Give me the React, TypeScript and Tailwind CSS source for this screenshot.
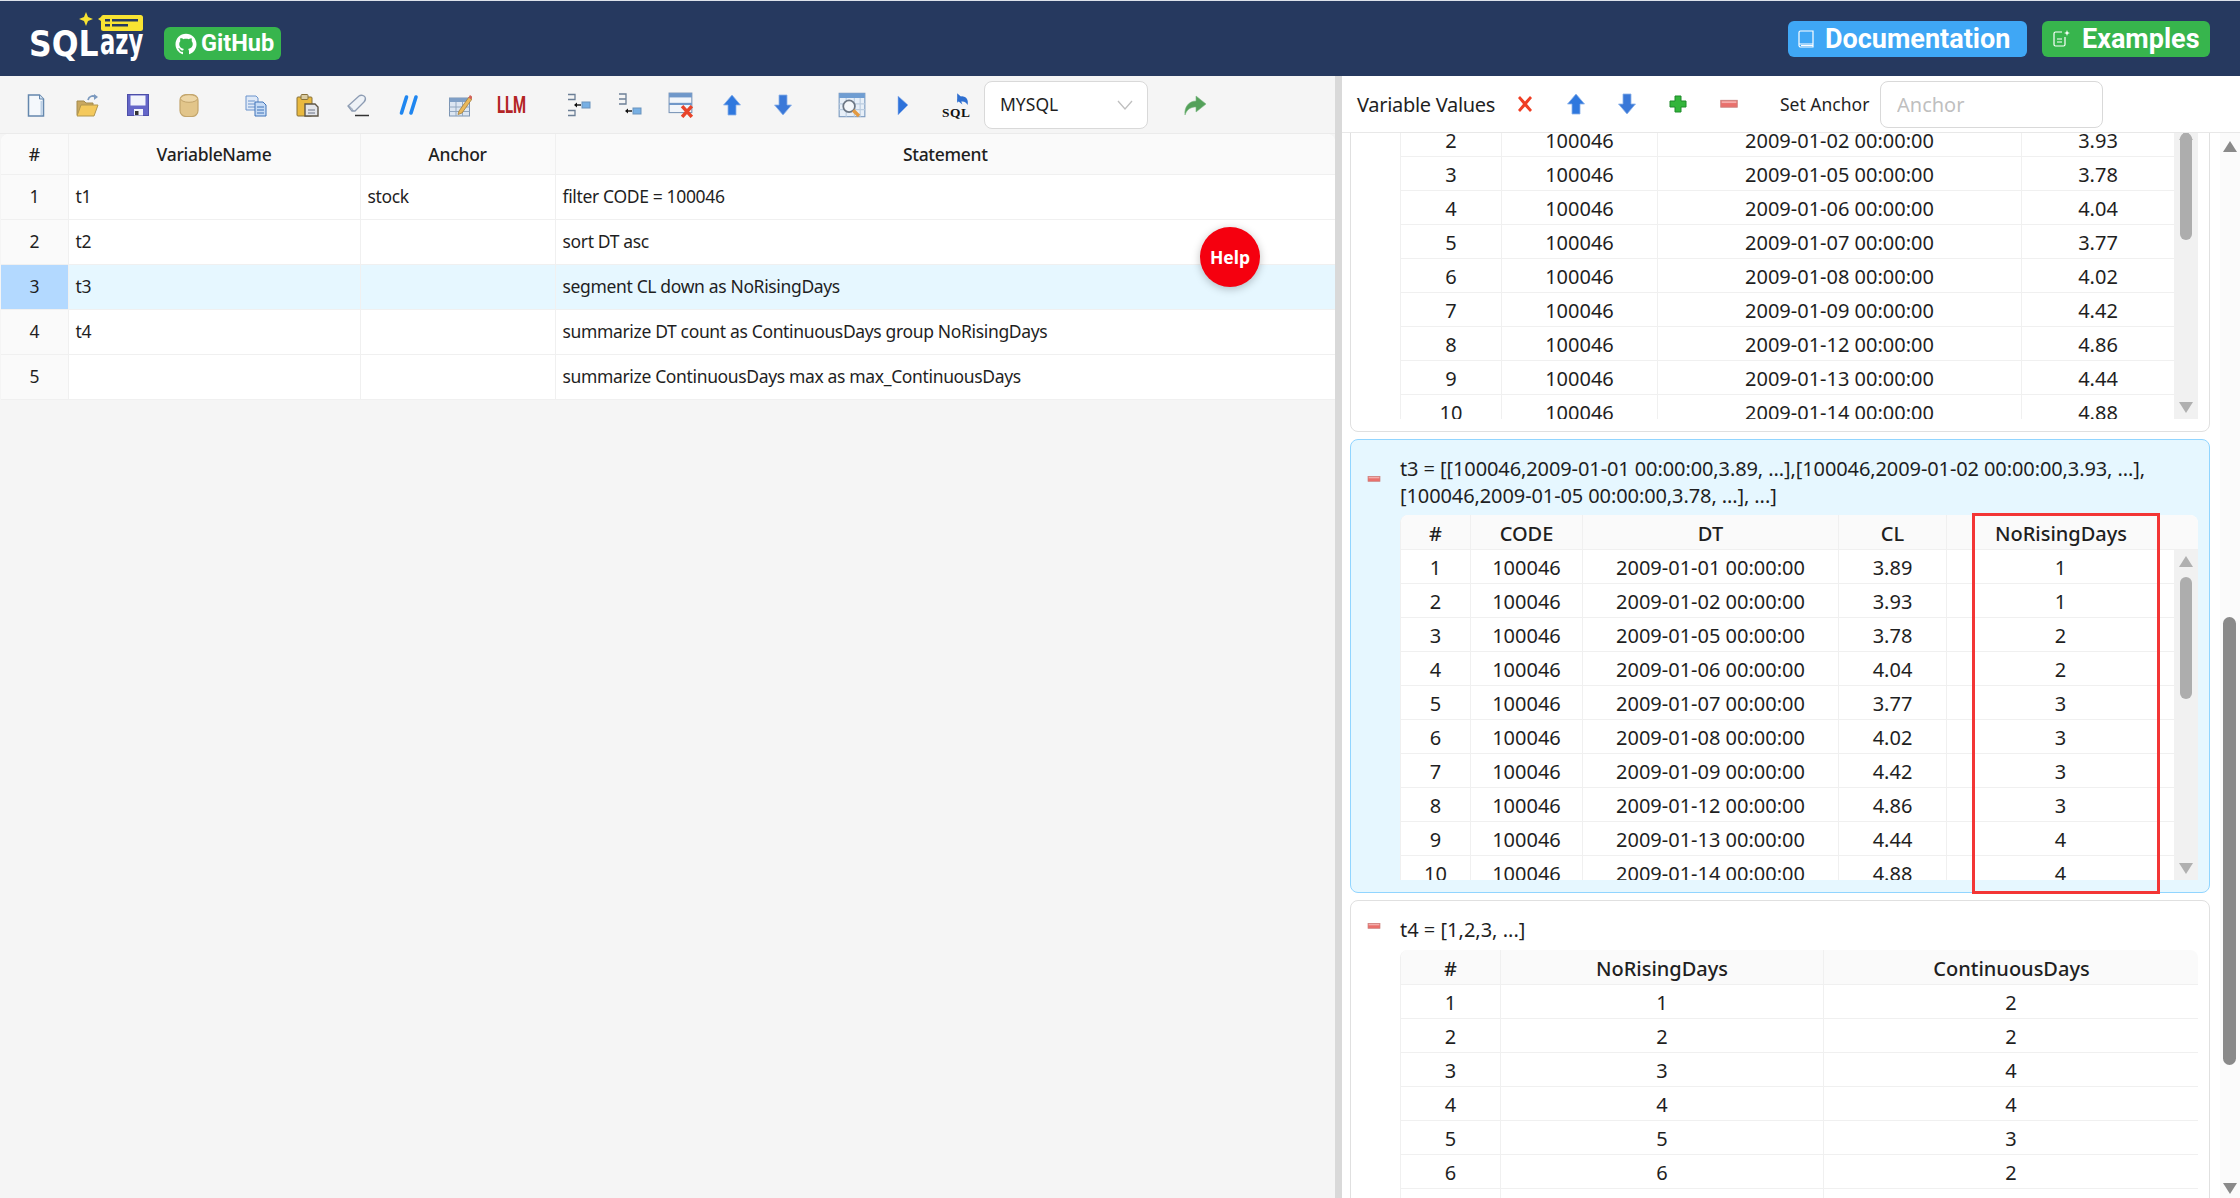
import { AiOutlineGithub } from 'react-icons/ai'
import type { ReactNode } from 'react'

type Cell = string | number

const STOCK: Array<[string, string, string]> = [
  ['1', '2009-01-01 00:00:00', '3.89'],
  ['2', '2009-01-02 00:00:00', '3.93'],
  ['3', '2009-01-05 00:00:00', '3.78'],
  ['4', '2009-01-06 00:00:00', '4.04'],
  ['5', '2009-01-07 00:00:00', '3.77'],
  ['6', '2009-01-08 00:00:00', '4.02'],
  ['7', '2009-01-09 00:00:00', '4.42'],
  ['8', '2009-01-12 00:00:00', '4.86'],
  ['9', '2009-01-13 00:00:00', '4.44'],
  ['10', '2009-01-14 00:00:00', '4.88'],
]
const SEGMENTS = [1, 1, 2, 2, 3, 3, 3, 3, 4, 4]

const STATEMENTS = [
  { id: 1, name: 't1', anchor: 'stock', text: 'filter CODE = 100046' },
  { id: 2, name: 't2', anchor: '', text: 'sort DT asc' },
  { id: 3, name: 't3', anchor: '', text: 'segment CL down as NoRisingDays' },
  { id: 4, name: 't4', anchor: '', text: 'summarize DT count as ContinuousDays group NoRisingDays' },
  { id: 5, name: '', anchor: '', text: 'summarize ContinuousDays max as max_ContinuousDays' },
]

function Svg({ children, className = 'h-6 w-6' }: { children: ReactNode; className?: string }) {
  return (
    <svg viewBox="0 0 24 24" className={className}>
      {children}
    </svg>
  )
}

const IconNew = () => (
  <Svg>
    <path d="M4.500 2h11l4 4v17h-15z" fill="#f4f8fc" stroke="#6487ad" strokeWidth="1.500" />
    <path d="M15.500 2v4h4" fill="#cfdff0" stroke="#6487ad" />
    <path d="M17.500 8v14" stroke="#bcd0e6" strokeWidth="2" />
  </Svg>
)
const IconOpen = () => (
  <Svg>
    <path d="M2 8h7l2 2h7v12H2z" fill="#c9a860" stroke="#a48a4c" />
    <path d="M6 12h17l-4 11H2z" fill="#f4c95c" stroke="#b2974f" />
    <path d="M13 7c1-4 5-5 8-3" fill="none" stroke="#7c9abf" strokeWidth="1.800" />
    <path d="M19 1l4 3-4 3z" fill="#7c9abf" />
  </Svg>
)
const IconSave = () => (
  <Svg>
    <rect x="1.500" y="1.500" width="21" height="21" fill="#6466c8" stroke="#4d4fa8" />
    <rect x="4.500" y="2.500" width="15" height="10" fill="#f2f4fb" />
    <rect x="8" y="16" width="9" height="6.500" fill="#f2f4fb" />
    <rect x="9" y="18" width="3.500" height="4" fill="#333" />
  </Svg>
)
const IconDb = () => (
  <Svg>
    <rect x="3" y="1.500" width="18" height="22" rx="6" fill="#e2c58a" stroke="#c3a56c" strokeWidth="1.200" />
    <ellipse cx="12" cy="5.500" rx="8.500" ry="3.800" fill="#edd6a6" stroke="#c3a56c" />
  </Svg>
)
const IconCopy = () => (
  <Svg>
    <path d="M2 3h10l2 2v12H2z" fill="#dfe9f7" stroke="#6b93cc" />
    <path d="M4 8h7M4 11h7M4 14h7" stroke="#6b93cc" />
    <path d="M11 9h8l3 3v11H11z" fill="#c6dbf5" stroke="#3f72b8" />
    <path d="M13 14h7M13 17h7M13 20h7" stroke="#3f72b8" />
  </Svg>
)
const IconPaste = () => (
  <Svg>
    <rect x="2" y="4" width="15" height="19" rx="1" fill="#e9b93f" stroke="#87703a" />
    <rect x="6" y="1.500" width="7" height="5" rx="1" fill="#d9cba2" stroke="#87703a" />
    <path d="M10 11h10l3 3v9H10z" fill="#e3e5ea" stroke="#5d5547" strokeWidth="1.400" />
    <path d="M13 17h7M13 20h7" stroke="#6c7486" />
  </Svg>
)
const IconEraser = () => (
  <Svg>
    <path d="M2 13l11-10c2-1.500 5-.5 6 1 1 2 1 3-1 5l-9 9H6z" fill="#eef2f7" stroke="#8d9cb3" strokeWidth="1.300" />
    <path d="M2 13c2 0 5 3 5 5" fill="none" stroke="#8d9cb3" />
    <path d="M9 22.500h14" stroke="#333" strokeWidth="1.500" />
  </Svg>
)
const IconComment = () => (
  <Svg>
    <path d="M9.500 4L4.500 20M19 4l-5 16" stroke="#1f86f0" strokeWidth="3.600" strokeLinecap="round" />
  </Svg>
)
const IconTableEdit = () => (
  <Svg>
    <rect x="1.500" y="5" width="20" height="18" fill="#dce6f2" stroke="#7d95b3" />
    <rect x="1.500" y="5" width="20" height="4" fill="#7f9fc6" />
    <path d="M8 9v14M14.500 9v14M1.500 14h20M1.500 18.500h20" stroke="#92a7c0" />
    <path d="M11 18l10-14 3 2-10 14-4 1.500z" fill="#eab85a" stroke="#a37d3a" strokeWidth=".8" />
    <path d="M20.500 4.500l1.500-2.500 2.500 2-1.500 2.500z" fill="#d2635a" />
  </Svg>
)
const IconBranch = () => (
  <Svg>
    <path d="M1 1.500h7v5H1M1 17.500h7v5H1" fill="none" stroke="#6c7f96" strokeWidth="1.300" />
    <rect x="15" y="9" width="8" height="6" fill="#78b0e4" stroke="#6a93bd" />
    <path d="M14 12H8" stroke="#111" strokeWidth="1.400" />
    <path d="M7 12l3-2.500v5z" fill="#111" />
  </Svg>
)
const IconBranchChild = () => (
  <Svg>
    <path d="M1 1h7v5H1M1 6h7v5H1" fill="none" stroke="#6c7f96" strokeWidth="1.300" />
    <rect x="15" y="15" width="8" height="6" fill="#78b0e4" stroke="#6a93bd" />
    <path d="M14 18H8" stroke="#111" strokeWidth="1.400" />
    <path d="M7 18l3-2.500v5z" fill="#111" />
  </Svg>
)
const IconDelRow = () => (
  <Svg className="h-[26px] w-[26px]">
    <rect x="1" y="1" width="21" height="18" fill="#f1f5fa" stroke="#7b96b8" />
    <rect x="1" y="1" width="21" height="4" fill="#6f97c9" />
    <path d="M1 11h21" stroke="#6f97c9" strokeWidth="2" />
    <path d="M13 13l9 10M22 13l-9 10" stroke="#e8442a" strokeWidth="3.200" />
  </Svg>
)
const IconUp = () => (
  <Svg>
    <path d="M12 2l8.500 10H16v10H8V12H3.500z" fill="#2f78de" stroke="#8ab1ea" strokeWidth=".8" />
  </Svg>
)
const IconDown = () => (
  <Svg>
    <path d="M12 22L3.500 12H8V2h8v10h4.500z" fill="#3a78d8" stroke="#8ab1ea" strokeWidth=".8" />
  </Svg>
)
const IconQuery = () => (
  <Svg className="h-7 w-7">
    <rect x="1" y="2" width="22" height="20" fill="#e7eff8" stroke="#7f9dc1" />
    <rect x="1" y="2" width="22" height="4" fill="#6f9dd2" />
    <path d="M7 6v16M14 6v16M19 6v16M1 11h22M1 16h22" stroke="#bccde0" />
    <circle cx="9.500" cy="13" r="5" fill="#f4f7fa" stroke="#6c7785" strokeWidth="1.500" />
    <path d="M13 16.500l5 5" stroke="#e39a42" strokeWidth="3" />
  </Svg>
)
const IconPlay = () => (
  <Svg>
    <path d="M7 3l10 9-10 10z" fill="#2e72da" stroke="#9ab9ec" strokeWidth=".6" />
  </Svg>
)
const IconSqlBack = () => (
  <Svg className="h-7 w-7">
    <path d="M13 8c1-3 4-4.500 6-3 3 1 3.500 4 3 7-1-2-3-3.500-5.500-3l1 2.500z" fill="#2f6fd0" />
    <path d="M13 2l4.500 4L13 10z" fill="#2f6fd0" />
    <text x="0" y="22" fontFamily="'Liberation Serif', serif" fontWeight="700" fontSize="11.500" fill="#111" textLength="24">
      SQL
    </text>
  </Svg>
)
const IconForward = () => (
  <Svg>
    <path d="M2 22C1 14 6 8 13 8V3l10 8-10 8v-5c-5 0-9 2-11 8z" fill="#54a15a" stroke="#7eb883" strokeWidth=".6" />
  </Svg>
)
const IconRemove = () => (
  <Svg>
    <path d="M7 4l5 5.500L17 4l2 2-5 6 5 6-2 2-5-5.500L7 20l-2-2 5-6-5-6z" fill="#ef3e24" />
  </Svg>
)
const IconAdd = () => (
  <Svg>
    <path d="M9 4h6v5h5v6h-5v5H9v-5H4V9h5z" fill="#33b53b" stroke="#1f8a2b" />
  </Svg>
)
const IconMinus = ({ className = 'h-[22px] w-[22px]' }: { className?: string }) => (
  <Svg className={className}>
    <rect x="3" y="8" width="18" height="7.500" fill="#e9706c" stroke="#c9807d" />
    <rect x="4" y="9" width="16" height="2" fill="#f3adab" />
  </Svg>
)
const IconLlm = () => (
  <span className="ml-[2px] block origin-center scale-x-[0.62] font-['Roboto',sans-serif] text-[24px] leading-none font-bold text-[#b32424]">
    LLM
  </span>
)

function ToolBtn({ children, className = '' }: { children: ReactNode; className?: string }) {
  return <button className={`flex h-8 w-[51px] shrink-0 items-center justify-center ${className}`}>{children}</button>
}

function Logo() {
  return (
    <div className="relative h-[50px] w-[116px] shrink-0 font-['DejaVu_Sans',sans-serif] font-bold text-white select-none">
      <svg viewBox="0 0 116 24" className="absolute top-0 left-0 h-6 w-[116px]">
        <path d="M57 0l2 5 5 2-5 2-2 5-2-5-5-2 5-2z" fill="#f8e332" />
        <path d="M69 7l3-2v4z" fill="#f8e332" />
        <rect x="72" y="3" width="42" height="16" rx="2.500" fill="#f8e332" />
        <path d="M76 7h5v2.500h-5zM83 7h26v2.500H83zM76 12h5v2.500h-5zM83 12h16v2.500H83z" fill="#26395f" />
      </svg>
      <span className="absolute top-[15px] left-0 block origin-left scale-x-[0.9] text-[35px] leading-none">SQL</span>
      <span className="absolute top-[12px] left-[71px] block origin-left scale-x-[0.63] text-[36px] leading-none font-bold">azy</span>
    </div>
  )
}

function Header() {
  return (
    <header className="flex h-[76px] shrink-0 items-start border-t border-[#dde2ea] bg-[#26395f] font-['Roboto',sans-serif] font-bold text-white">
      <div className="ml-[29px] mt-[11px]">
        <Logo />
      </div>
      <a className="mt-[26px] ml-[19px] flex h-[33px] w-[117px] items-center gap-[3px] rounded-[6px] bg-[#37b54d] pl-[10px] text-[23.5px] leading-none">
        <AiOutlineGithub size={24} />
        GitHub
      </a>
      <div className="mt-[20px] mr-[30px] ml-auto flex gap-[15px] text-[27px] leading-none">
        <a className="flex h-[36px] w-[239px] items-center rounded-[6px] bg-[#3fa7f5] pl-[10px]">
          <svg viewBox="0 0 16 18" className="mr-[11px] h-[18px] w-4" fill="none" stroke="#fff" strokeWidth="1.200">
            <path d="M1 14.500V2.500A1.500 1.500 0 0 1 2.500 1H15v16H3a2 2 0 0 1-2-2.500zM1 14h14M3 15.500h12" />
          </svg>
          Documentation
        </a>
        <a className="flex h-[36px] w-[168px] items-center rounded-[6px] bg-[#37b54d] pl-[10px]">
          <svg viewBox="0 0 18 18" className="mr-[12px] h-[18px] w-[18px]" fill="none" stroke="#fff" strokeWidth="1.200">
            <path d="M10 2H3.500A1.500 1.500 0 0 0 2 3.500v11A1.500 1.500 0 0 0 3.500 16h8a1.500 1.500 0 0 0 1.500-1.500V7M5 9h5M5 12h5" />
            <path d="M15 0l.8 2.200L18 3l-2.200.8L15 6l-.8-2.200L12 3l2.200-.8z" fill="#fff" stroke="none" />
          </svg>
          Examples
        </a>
      </div>
    </header>
  )
}

function LeftPanel() {
  return (
    <section className="relative flex w-[1335px] shrink-0 flex-col bg-[#f5f5f5] font-['Noto_Sans',sans-serif] text-[17.5px] text-[#1f1f1f]">
      <div className="flex h-[58px] shrink-0 items-center border-b border-[#ebebeb] pl-[10px]">
        <ToolBtn><IconNew /></ToolBtn>
        <ToolBtn><IconOpen /></ToolBtn>
        <ToolBtn><IconSave /></ToolBtn>
        <ToolBtn><IconDb /></ToolBtn>
        <ToolBtn className="ml-4"><IconCopy /></ToolBtn>
        <ToolBtn><IconPaste /></ToolBtn>
        <ToolBtn><IconEraser /></ToolBtn>
        <ToolBtn><IconComment /></ToolBtn>
        <ToolBtn><IconTableEdit /></ToolBtn>
        <ToolBtn><IconLlm /></ToolBtn>
        <ToolBtn className="ml-[17px]"><IconBranch /></ToolBtn>
        <ToolBtn><IconBranchChild /></ToolBtn>
        <ToolBtn><IconDelRow /></ToolBtn>
        <ToolBtn><IconUp /></ToolBtn>
        <ToolBtn><IconDown /></ToolBtn>
        <ToolBtn className="ml-[18px]"><IconQuery /></ToolBtn>
        <ToolBtn><IconPlay /></ToolBtn>
        <ToolBtn className="ml-[2px]"><IconSqlBack /></ToolBtn>
        <div className="ml-[3px] flex h-12 w-[164px] shrink-0 items-center justify-between rounded-[8px] border border-[#d9d9d9] bg-white pr-[14px] pl-[15px]">
          MYSQL
          <svg viewBox="0 0 16 10" className="h-[10px] w-4" fill="none" stroke="#bfbfbf" strokeWidth="1.300">
            <path d="M1 1l7 8 7-8" />
          </svg>
        </div>
        <ToolBtn className="ml-[21px]"><IconForward /></ToolBtn>
      </div>
      <div className="pl-px">
        <table className="w-full table-fixed border-collapse overflow-hidden rounded-t-[8px] bg-white">
          <colgroup>
            <col className="w-[67px]" />
            <col className="w-[292px]" />
            <col className="w-[195px]" />
            <col />
          </colgroup>
          <thead>
            <tr className="h-10 bg-[#fafafa]">
              {['#', 'VariableName', 'Anchor', 'Statement'].map((h) => (
                <th key={h} className="border-r border-b border-[#f0f0f0] text-center font-medium tracking-[-0.3px] last:border-r-0">
                  {h}
                </th>
              ))}
            </tr>
          </thead>
          <tbody className="tracking-[-0.35px]">
            {STATEMENTS.map((s) => (
              <tr key={s.id} className={`h-[45px] ${s.id === 3 ? 'bg-[#e6f7ff]' : ''}`}>
                <td className={`border-r border-b border-[#f0f0f0] text-center ${s.id === 3 ? 'bg-[#b3d9ff]' : 'bg-[#fafafa]'}`}>{s.id}</td>
                <td className="border-r border-b border-[#f0f0f0] px-[7px]">{s.name}</td>
                <td className="border-r border-b border-[#f0f0f0] px-[7px]">{s.anchor}</td>
                <td className="border-b border-[#f0f0f0] px-[7px]">{s.text}</td>
              </tr>
            ))}
          </tbody>
        </table>
      </div>
      <button className="absolute top-[151px] left-[1200px] flex h-[60px] w-[60px] items-center justify-center rounded-full bg-[#f5000f] text-[17.5px] font-bold text-white shadow-[0_2px_8px_rgba(0,0,0,0.25)]">
        Help
      </button>
    </section>
  )
}

function MiniScrollbar({ thumbTop, thumbHeight }: { thumbTop: number; thumbHeight: number }) {
  return (
    <div className="relative w-6 shrink-0 bg-[#f1f1f1]">
      <div className="absolute top-[6px] left-[5px] h-0 w-0 border-x-[7px] border-b-[11px] border-x-transparent border-b-[#b0b0b0]" />
      <div className="absolute left-[6px] w-3 rounded-full bg-[#adadad]" style={{ top: thumbTop, height: thumbHeight }} />
      <div className="absolute bottom-[6px] left-[5px] h-0 w-0 border-x-[7px] border-t-[11px] border-x-transparent border-t-[#b0b0b0]" />
    </div>
  )
}

function DataTable({
  widths,
  head,
  rows,
  bodyHeight,
  thumb,
}: {
  widths: number[]
  head?: string[]
  rows: Cell[][]
  bodyHeight?: number
  thumb?: [number, number]
}) {
  return (
    <div className="w-[798px] overflow-hidden rounded-t-[8px] border-l border-[#f0f0f0] bg-white">
      {head && (
        <div className="flex h-[35px] border-b border-[#f0f0f0] bg-[#fafafa] font-medium">
          {head.map((h, i) => (
            <div
              key={h}
              className="flex shrink-0 items-center justify-center border-r border-[#f0f0f0] pt-[3px] last:border-r-0"
              style={{ width: widths[i] }}
            >
              {h}
            </div>
          ))}
        </div>
      )}
      <div className="flex overflow-hidden" style={{ height: bodyHeight }}>
        <div className="min-w-0 flex-1">
          {rows.map((row, r) => (
            <div key={r} className="flex h-[34px] border-b border-[#f0f0f0]">
              {row.map((cell, i) => (
                <div
                  key={i}
                  className="flex shrink-0 items-center justify-center border-r border-[#f0f0f0] pt-[2px] last:flex-1 last:border-r-0"
                  style={{ width: widths[i] }}
                >
                  {cell}
                </div>
              ))}
            </div>
          ))}
        </div>
        {thumb && <MiniScrollbar thumbTop={thumb[0]} thumbHeight={thumb[1]} />}
      </div>
    </div>
  )
}

function RightPanel() {
  const t2Rows = STOCK.slice(1).map(([n, dt, cl]) => [n, '100046', dt, cl])
  const t3Rows = STOCK.map(([n, dt, cl], i) => [n, '100046', dt, cl, SEGMENTS[i]])
  const t4Rows = [
    [1, 1, 2],
    [2, 2, 2],
    [3, 3, 4],
    [4, 4, 4],
    [5, 5, 3],
    [6, 6, 2],
    [7, 7, 2],
  ]
  return (
    <section className="flex min-w-0 flex-1 flex-col bg-white font-['Noto_Sans',sans-serif] text-[20px] text-[#1f1f1f]">
      <div className="flex h-[57px] shrink-0 items-center border-b border-[#e8e8e8] pl-[15px]">
        <span className="w-[142px] shrink-0 pt-px tracking-[-0.3px] whitespace-nowrap">Variable Values</span>
        <ToolBtn><IconRemove /></ToolBtn>
        <ToolBtn><IconUp /></ToolBtn>
        <ToolBtn><IconDown /></ToolBtn>
        <ToolBtn><IconAdd /></ToolBtn>
        <ToolBtn><IconMinus /></ToolBtn>
        <span className="ml-[26px] w-[100px] shrink-0 text-[17.5px] whitespace-nowrap">Set Anchor</span>
        <input
          placeholder="Anchor"
          className="h-[47px] w-[223px] rounded-[8px] border border-[#d9d9d9] bg-white px-4 outline-none placeholder:text-[#bfbfbf]"
        />
      </div>
      <div className="flex min-h-0 flex-1 overflow-hidden">
        <div className="ml-2 flex w-[860px] shrink-0 flex-col gap-[7px]">
          <div className="mt-[-11px] rounded-[8px] border border-[#e0e0e0] pb-3 pl-[49px]">
            <DataTable widths={[101, 156, 364, 153]} rows={t2Rows} bodyHeight={296} thumb={[10, 107]} />
          </div>
          <div className="relative rounded-[8px] border border-[#91d5ff] bg-[#e6f7ff] pt-[15px] pb-3 pl-[49px]">
            <div className="absolute top-[31px] left-[15px] h-4">
              <IconMinus className="h-4 w-4" />
            </div>
            <p className="mb-[6px] w-[790px] leading-[27px] tracking-[-0.1px]">
              t3 = [[100046,2009-01-01 00:00:00,3.89, ...],[100046,2009-01-02 00:00:00,3.93, ...],[100046,2009-01-05 00:00:00,3.78, ...], ...]
            </p>
            <DataTable
              widths={[70, 112, 256, 108, 228]}
              head={['#', 'CODE', 'DT', 'CL', 'NoRisingDays']}
              rows={t3Rows}
              bodyHeight={330}
              thumb={[27, 122]}
            />
            <div className="absolute top-[73px] left-[621px] h-[381px] w-[188px] border-[3px] border-[#f33535]" />
          </div>
          <div className="relative rounded-[8px] border border-[#e0e0e0] pt-[15px] pl-[49px]">
            <div className="absolute top-[17px] left-[15px] h-4">
              <IconMinus className="h-4 w-4" />
            </div>
            <p className="mb-[7px] leading-[27px]">t4 = [1,2,3, ...]</p>
            <DataTable
              widths={[100, 323, 375]}
              head={['#', 'NoRisingDays', 'ContinuousDays']}
              rows={t4Rows}
            />
          </div>
        </div>
        <div className="relative ml-[10px] w-5 shrink-0 bg-[#fbfbfb]">
          <div className="absolute top-[8px] left-[3px] h-0 w-0 border-x-[7px] border-b-[11px] border-x-transparent border-b-[#8a8a8a]" />
          <div className="absolute top-[484px] left-[3px] h-[448px] w-[13px] rounded-full bg-[#8a8a8a]" />
          <div className="absolute bottom-[4px] left-[3px] h-0 w-0 border-x-[7px] border-t-[11px] border-x-transparent border-t-[#8a8a8a]" />
        </div>
      </div>
    </section>
  )
}

export default function App() {
  return (
    <div className="flex h-[1198px] w-[2240px] flex-col overflow-hidden bg-white">
      <Header />
      <div className="flex min-h-0 flex-1">
        <LeftPanel />
        <div className="w-[7px] shrink-0 bg-[#d9d9d9]" />
        <RightPanel />
      </div>
    </div>
  )
}
